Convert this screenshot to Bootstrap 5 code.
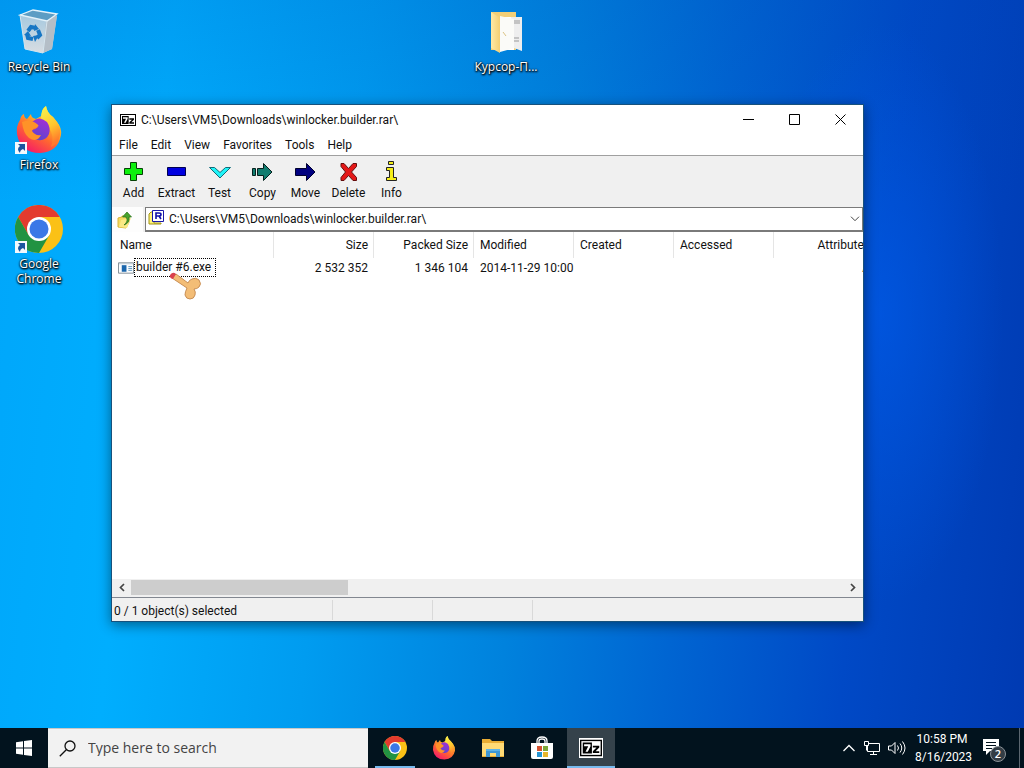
<!DOCTYPE html>
<html lang="en">
<head>
<meta charset="utf-8">
<meta name="viewport" content="width=device-width, initial-scale=1">
<title>Desktop</title>
<link href="https://cdn.jsdelivr.net/npm/bootstrap@5.3.0/dist/css/bootstrap.min.css" rel="stylesheet">
<style>
body{font-family:"Open Sans","Noto Sans",sans-serif;font-size:12px;line-height:16px;color:#111;overflow:hidden}
button{font:inherit;color:inherit;background:none;border:0;padding:0}
svg{display:block;flex:none}
.desk{background:
 radial-gradient(ellipse 12% 40% at 86% 43%,rgba(0,92,236,.6),rgba(0,92,236,0)),
 linear-gradient(180deg,rgba(0,70,180,.16),rgba(0,70,180,0) 28%),
 linear-gradient(96deg,#00a6fa 0%,#00aefe 16%,#009cf0 34%,#0082dd 52%,#0065d2 67%,#0049c6 83%,#003ab2 100%)}
.shortcut{position:absolute;width:76px;color:#fff;text-decoration:none;text-align:center;line-height:15px;text-shadow:0 1px 2px #000,1px 1px 2px #000,0 0 2px #000}
.shortcut svg{margin:0 auto 3px}
.bin{left:1px;top:8px}.fox{left:1px;top:106px}.chr{left:1px;top:205px}.fold{left:468px;top:8px}
.win{font-family:Roboto,"Open Sans",sans-serif;position:absolute;left:111px;right:160px;top:104px;bottom:106px;background:#fff;border:1px solid #17517c;box-shadow:0 3px 12px rgba(0,0,0,.45)}
.titlebar{height:30px;padding-left:8px}
.titlebar h1{font-size:12px;line-height:16px;margin:0 0 0 5px;font-weight:400}
.cap{width:46px;height:28px;display:grid;place-items:center}
.titlebar>div{margin-bottom:2px}
.menus{height:20px;padding-left:7px;gap:13px}
.tools{height:52px;background:#f0f0f0;border-top:1px solid #a0a0a0}
.tool{width:43px;height:51px;display:flex;flex-direction:column;align-items:center;padding-top:5px}
.tool svg{margin-bottom:2px}
.tool span{white-space:nowrap}
.addr{height:25px;background:#f0f0f0}
.up{width:31px;background:#fdfdfd;padding-right:5px}
.combo{margin-left:2px;border:1px solid #7a7a7a;border-bottom-width:2px;background:#fff;padding-left:2px}
.combo select{font:inherit;color:inherit;border:0;padding:0 20px 0 5px;height:22px;border-radius:0;background:#fff url("data:image/svg+xml,%3Csvg xmlns='http://www.w3.org/2000/svg' width='10' height='6'%3E%3Cpath d='M1 .7l4 4 4-4' fill='none' stroke='%23444'/%3E%3C/svg%3E") no-repeat right 2px center;background-size:10px 6px}
.files{table-layout:fixed;width:764px;border-collapse:separate;border-spacing:0}
.files th{font-weight:400;height:26px;padding:0 5px 0 6px;border-right:1px solid #e5e5e5}
.files td{height:18px;padding:0 6px}
.files th,.files td{white-space:nowrap}
.files th:first-child{padding-left:8px}
.n{text-align:right}
.focusbox{border:1px dotted #000;padding:0 4px 0 1px;line-height:17px}
.sbar{height:18px;background:#f0f0f0;padding:0 1px 2px}
.sbar button{width:18px;height:17px;display:grid;place-items:center}
.thumb{width:217px;height:15px;background:#cdcdcd}
.status{height:24px;background:#f0f0f0;border-top:1px solid #828790}
.status span{border-right:1px solid #d9d9d9;height:20px;width:100px;margin-top:2px;line-height:22px;padding-left:2px}
.status span:first-child{width:221px}
.pointer-img{position:absolute;left:168px;top:271px}
.taskbar{height:40px;background:#02131e;color:#fff}
.start{width:48px}
.search{width:320px;background:#f2f2f2;color:#111;padding-left:11px;border:1px solid #c8c8c8;border-width:1px 0}
.search input{font-size:14px;border:0;background:none;outline:0;padding:0;margin-left:12px;color:#333}
.search input::placeholder{color:#444;opacity:1}
.apps{gap:1px;margin-left:3px}
.app{width:48px;display:grid;place-items:center;position:relative}
.run::after{content:"";position:absolute;left:4px;right:4px;bottom:0;height:2px;background:#76b9ed}
.now{background:#35424b}.now::after{left:0;right:0}
.tray{gap:7px}
.clock{width:54px;text-align:center;line-height:18px;font-family:Roboto,"Open Sans",sans-serif;margin-left:2px;white-space:nowrap}
.note{width:37px;margin-right:6px;display:grid;place-items:center}
.peek{width:5px;border-left:1px solid #5b6670}
</style>
</head>
<body>
<svg width="0" height="0" class="position-absolute" aria-hidden="true">
<defs>
<linearGradient id="ffo" x1=".85" y1="0" x2=".25" y2="1"><stop offset="0" stop-color="#fff44f"/><stop offset=".35" stop-color="#ffb328"/><stop offset=".6" stop-color="#ff6a2e"/><stop offset="1" stop-color="#f5156c"/></linearGradient>
<linearGradient id="ffy" x1="0" y1="0" x2=".3" y2="1"><stop offset="0" stop-color="#f8f850"/><stop offset=".6" stop-color="#ffc52e"/><stop offset="1" stop-color="#ff7a2c"/></linearGradient>
<linearGradient id="ffp" x1=".7" y1="0" x2=".3" y2="1"><stop offset="0" stop-color="#a22fd5"/><stop offset="1" stop-color="#5a45d0"/></linearGradient>
<linearGradient id="binl" x1="0" y1="0" x2="0" y2="1"><stop offset="0" stop-color="#a6c9df"/><stop offset="1" stop-color="#d8dde2"/></linearGradient>
<linearGradient id="fd" x1="0" y1="0" x2="1" y2="0"><stop offset="0" stop-color="#ffe9a6"/><stop offset="1" stop-color="#f5cf72"/></linearGradient>
</defs>
<symbol id="firefox" viewBox="0 0 48 48">
<path d="M5 14Q6 9 9 8Q9 12 12 13L16 8Q16 12 21 13L28 9Q25 4 31 0Q32 7 38 11L42 16Q47 22 46 29Q43 46 25 47Q5 47 2 28Q1 20 5 14Z" fill="url(#ffo)"/>
<path d="M31 0Q32 7 38 11L42 16Q46 22 45 29Q43 38 36 41Q40 30 34 22Q27 17 26 11Q26 4 31 0Z" fill="url(#ffy)"/>
<path d="M17 16Q24 9 32 16Q36 22 34 28Q31 35 23 34Q14 32 14 24Q19 25 23 21Q18 20 17 16Z" fill="url(#ffp)"/>
<path d="M7 16Q15 12 22 18Q25 20 22 21Q18 22 17 25Q20 30 26 29Q22 37 14 32Q8 27 7 16Z" fill="#ff9228"/>
</symbol>
<symbol id="chrome" viewBox="0 0 48 48">
<circle cx="24" cy="24" r="24" fill="#fbc116"/>
<path d="M3.2 12A24 24 0 0 1 44.8 12H24L13.6 30Z" fill="#e33b2e"/>
<path d="M3.2 12A24 24 0 0 0 24 48L34.4 30H24L13.6 30Z" fill="#229342"/>
<circle cx="24" cy="24" r="12" fill="#fff"/><circle cx="24" cy="24" r="9.5" fill="#3b78e7"/>
</symbol>
<symbol id="link" viewBox="0 0 12 12"><path fill="#f4f8fc" d="M0 0h12v12H0z"/><path d="M3 2h7v7L8 7Q5 8 5 11Q1 7 5 4Z" fill="#1a559f"/></symbol>
<symbol id="seven" viewBox="0 0 24 18"><path d="M0 0h24v18H0z"/><path d="M1.500 1.500h21v15h-21z" fill="#fff"/><path d="M3 3h10v12H3z"/><path d="M4.500 5h7v2L8.500 13H6l3-6H4.500z" fill="#fff"/><path d="M14 6.500h7v2l-4 4h4v2h-7v-2l4-4h-4z"/></symbol>
</svg>

<div class="d-flex flex-column vh-100">
<main class="desk flex-grow-1 position-relative">
<a href="#" class="shortcut bin"><svg width="42" height="48" viewBox="0 0 42 48"><path d="M2 7l5 34 18 4 9-4 5-33z" fill="url(#binl)"/><path d="M28 13l11-6-5 34-9 4z" fill="#b4bec7"/><path d="M2 7l13-5 24 4-10 7z" fill="#5c9dc4" stroke="#e3f2fa" stroke-width="1.300"/><path d="M2 7l5 34 18 4 4-32" fill="none" stroke="#d5e5ee"/><g fill="none" stroke="#1676c4" stroke-width="4"><path d="M10 23l3-4 5 1"/><path d="M20 22l2 5-3 3"/><path d="M15 31l-5-1-1-4"/></g><path d="M17 16l4 5-5 2zM21 27l-4 7-2-6zM6 27l4-4 3 5z" fill="#1676c4"/></svg>Recycle Bin</a>
<a href="#" class="shortcut fox"><svg width="48" height="48" viewBox="0 0 48 48"><use href="#firefox" width="48" height="48"/><use href="#link" y="36" width="12" height="12"/></svg>Firefox</a>
<a href="#" class="shortcut chr"><svg width="48" height="48" viewBox="0 0 48 48"><use href="#chrome" width="48" height="48"/><use href="#link" y="36" width="12" height="12"/></svg>Google Chrome</a>
<a href="#" class="shortcut fold"><svg width="36" height="48" viewBox="0 0 36 48"><path d="M3 4h25v38H3z" fill="#f3cf77"/><path d="M13 9h13v33H13z" fill="#fff"/><path d="M23 9h11v34l-11-4z" fill="#eee"/><path d="M25 13h7M25 15h7M26 30h5M26 33h5" stroke="#999"/><path d="M12 8l14 3v29l-14 4z" fill="#fbfbf8"/><path d="M3 4l9 6v35l-9-5z" fill="url(#fd)"/><path d="M15 24l3 4" stroke="#dbc384"/></svg>Курсор-П...</a>

<section class="win d-flex flex-column" aria-label="Archive">
<header class="titlebar d-flex align-items-center"><svg width="16" height="12"><use href="#seven" width="16" height="12"/></svg><h1>C:\Users\VM5\Downloads\winlocker.builder.rar\</h1>
<div class="ms-auto d-flex"><button class="cap" aria-label="Minimize"><svg width="11" height="11" viewBox="0 0 11 11"><path d="M0 5h11v1H0z"/></svg></button><button class="cap" aria-label="Maximize"><svg width="11" height="11"><path d="M.5 .5h10v10H.5z" fill="none" stroke="#000"/></svg></button><button class="cap" aria-label="Close"><svg width="11" height="11"><path d="M.5 .5l10 10M10.500 .5l-10 10" stroke="#000"/></svg></button></div></header>
<nav class="menus d-flex align-items-center" aria-label="Menu"><button>File</button><button>Edit</button><button>View</button><button>Favorites</button><button>Tools</button><button>Help</button></nav>
<div class="tools d-flex flex-shrink-0">
<button class="tool"><svg width="22" height="22" viewBox="1 0 22 22"><path d="M8.500 1.500h6v6h6v6h-6v6h-6v-6h-6v-6h6z" fill="#0df00d" stroke="#064006"/></svg><span>Add</span></button>
<button class="tool"><svg width="22" height="22" viewBox="1 0 22 22"><path d="M2.500 6.500h18v8h-18z" fill="#0000e0" stroke="#000050"/></svg><span>Extract</span></button>
<button class="tool"><svg width="22" height="22" viewBox="0 0 22 22"><path d="M.5 6.500h5l5.500 5 5.500-5h5l-10.500 10.500z" fill="#1ff4f8" stroke="#136b78"/></svg><span>Test</span></button>
<button class="tool"><svg width="22" height="22" viewBox="1 0 22 22"><path d="M1.500 7.500h3v7h-3zM6.500 7.500h6v-5l8.500 8.500-8.500 8.500v-5h-6z" fill="#127d70" stroke="#07201d"/></svg><span>Copy</span></button>
<button class="tool"><svg width="22" height="22" viewBox="1 0 22 22"><path d="M1.500 7.500h11v-5l8.500 8.500-8.500 8.500v-5h-11z" fill="#000080" stroke="#00002e"/></svg><span>Move</span></button>
<button class="tool"><svg width="22" height="22" viewBox="1 0 22 22"><path d="M4 2.500h3l4.500 5 4.500-5h3.500v3l-5 5.500 5 5.500v3H16l-4.500-5-4.500 5H4v-3L8.500 11 4 5.500z" fill="#e41818" stroke="#650e0e"/></svg><span>Delete</span></button>
<button class="tool"><svg width="22" height="22" viewBox="1 0 22 22"><path d="M8.500 .5h5v3h-5zM6.500 6.500h7v10h3v3h-10v-3h3v-7h-3z" fill="#f5ee19" stroke="#222"/></svg><span>Info</span></button>
</div>
<div class="addr d-flex flex-shrink-0"><button class="up d-grid" aria-label="Up one level"><svg class="m-auto" width="16" height="18" viewBox="0 0 16 18"><path d="M1 7l4-1v-1h2l1 1h4v5l-3 6-8-1z" fill="#f5da61" stroke="#d6b435"/><path d="M4 9l10-2-4 10-8-1z" fill="#fae985"/><path d="M7 14Q12 10 9 6H5.500L10 1l4.500 5H12Q13 12 7 14Z" fill="#49a32d" stroke="#277017" stroke-width=".7"/></svg></button>
<div class="combo flex-grow-1 d-flex"><svg width="16" height="18" viewBox="0 0 16 18"><path d="M1 6l2-2h3v11h7v1H1z" fill="#fff27a" stroke="#a29412"/><path d="M4.500 2.500h11v11h-11z" fill="#fff" stroke="#1818a8"/><path d="M8 11V5h3q2 0 2 1.500T11 8H8m3 0l2 3" fill="none" stroke="#1010a8" stroke-width="1.600"/></svg><select class="form-select" aria-label="Address"><option>C:\Users\VM5\Downloads\winlocker.builder.rar\</option></select></div></div>
<div class="flex-grow-1 overflow-hidden">
<table class="files"><colgroup><col style="width:162px"><col style="width:100px"><col style="width:100px"><col style="width:100px"><col style="width:100px"><col style="width:100px"><col></colgroup>
<thead><tr><th>Name</th><th class="n">Size</th><th class="n">Packed Size</th><th>Modified</th><th>Created</th><th>Accessed</th><th class="n">Attributes</th></tr></thead>
<tbody><tr><td><div class="d-flex align-items-center"><svg width="16" height="14" viewBox="0 0 17 14"><path d="M.5 1.500h16v11H.5z" fill="#fafdff" stroke="#7d8b93"/><path d="M1 2h15v1H1z" fill="#b9c8d0"/><path d="M4 4h5v7H4z" fill="#1b66ac"/><path d="M11 5.500h4M11 7.500h4M11 9.500h4" stroke="#5b94bf"/></svg><span class="focusbox">builder #6.exe</span></div></td><td class="n">2 532 352</td><td class="n">1 346 104</td><td>2014-11-29 10:00</td><td></td><td></td><td class="n">A</td></tr></tbody></table></div>
<div class="sbar d-flex align-items-center flex-shrink-0"><button aria-label="Scroll left"><svg width="6" height="9"><path d="M5 1L1.500 4.500 5 8" fill="none" stroke="#444" stroke-width="1.700"/></svg></button><div class="flex-grow-1"><div class="thumb"></div></div><button aria-label="Scroll right"><svg width="6" height="9"><path d="M1 1l3.500 3.500L1 8" fill="none" stroke="#444" stroke-width="1.700"/></svg></button></div>
<footer class="status d-flex flex-shrink-0"><span>0 / 1 object(s) selected</span><span></span><span></span></footer>
</section>
<svg class="pointer-img" width="34" height="30" viewBox="0 0 34 30"><path d="M8 3l12 9q1-3 4-4 4-2 7 1 3 4 0 7-2 2-5 2 2 3 1 6-1 4-5 4-4 0-5-4 0-3 2-7L4 7z" fill="#f3bd76" stroke="#c98f55"/><path d="M2 4q3-4 6-1l-3 5q-4-1-3-4z" fill="#d9414e"/></svg>
</main>

<footer class="taskbar d-flex flex-shrink-0">
<button class="start d-grid" aria-label="Start"><svg class="m-auto" width="16" height="16" viewBox="0 0 16 16"><path d="M0 2.300L7 1.300V7.500H0zM8 1.100L16 0V7.500H8zM0 8.500h7v6.200L0 13.700zM8 8.500h8V16L8 14.900z" fill="#fff"/></svg></button>
<label class="search d-flex align-items-center"><svg width="17" height="17" viewBox="0 0 17 17"><circle cx="11" cy="6" r="5" fill="none" stroke="#111" stroke-width="1.300"/><path d="M7.300 9.700L.8 16.200" stroke="#111" stroke-width="1.300"/></svg><input class="flex-grow-1" type="text" placeholder="Type here to search" aria-label="Search"></label>
<div class="apps d-flex">
<button class="app run" aria-label="Chrome"><svg width="24" height="24"><use href="#chrome" width="24" height="24"/></svg></button>
<button class="app" aria-label="Firefox"><svg width="24" height="24"><use href="#firefox" width="24" height="24"/></svg></button>
<button class="app" aria-label="File Explorer"><svg width="22" height="20" viewBox="0 0 22 20"><path d="M0 1h8l2 2h12v16H0z" fill="#e9ad34"/><path d="M0 5h22v13H0z" fill="#ffda75"/><path d="M4 11h14v8h-4v-4H8v4H4z" fill="#3e97d5"/><path d="M4 11h14v2H4z" fill="#5db3e8"/></svg></button>
<button class="app" aria-label="Store"><svg width="24" height="24" viewBox="0 0 24 24"><path d="M7 8V5q0-4 5-4t5 4v3M9 8V5q0-2 3-2t3 2v3" fill="none" stroke="#fff" stroke-width="1.300"/><path d="M1 7h22v14q0 2-2 2H3q-2 0-2-2z" fill="#fff"/><path d="M7 10h5v5H7z" fill="#d35230"/><path d="M13 10h5v5h-5z" fill="#7da83a"/><path d="M7 16h5v5H7z" fill="#2795d2"/><path d="M13 16h5v5h-5z" fill="#e8b62c"/></svg></button>
<button class="app run now" aria-label="7-Zip"><svg width="24" height="20" viewBox="0 0 24 20"><path d="M0 0h24v20H0z" fill="#fff"/><use href="#seven" x="1" y="1" width="22" height="18"/></svg></button>
</div>
<div class="tray d-flex align-items-center ms-auto">
<button aria-label="Hidden icons"><svg width="14" height="8" viewBox="0 0 14 8"><path d="M1.500 7L7 1.500 12.500 7" fill="none" stroke="#fff" stroke-width="1.300"/></svg></button>
<button aria-label="Network"><svg width="18" height="16" viewBox="0 0 18 16"><path d="M6 3.500h10.500v8H4.500V6M10.500 12v3M7 14.500h7M1.500 1.500h4v4h-4zM3.500 5.500v5" fill="none" stroke="#fff"/></svg></button>
<button aria-label="Volume"><svg width="18" height="16" viewBox="0 0 18 16"><path d="M.5 6h3L7 2.500v11L3.500 10h-3zM9.500 5.500q2 2.500 0 5M12 3.500q3.500 4.500 0 9M14.500 1.500q5 6.500 0 13" fill="none" stroke="#fff"/></svg></button>
<div class="clock"><div>10:58 PM</div><div>8/16/2023</div></div>
<button class="note" aria-label="Notifications"><svg width="26" height="28" viewBox="0 0 26 28"><path d="M1 5h16v12H8l-4 4v-4H1z" fill="#fff"/><path d="M4 8.500h10M4 11.500h10M4 14.500h6" stroke="#02131e"/><circle cx="16" cy="20" r="7.500" fill="#333d45" stroke="#8b9298"/><text x="16" y="24" text-anchor="middle" font-size="11" font-weight="600" fill="#fff">2</text></svg></button>
</div>
<button class="peek" aria-label="Show desktop"></button>
</footer>
</div>
<script src="https://cdn.jsdelivr.net/npm/bootstrap@5.3.0/dist/js/bootstrap.bundle.min.js"></script>
</body>
</html>
